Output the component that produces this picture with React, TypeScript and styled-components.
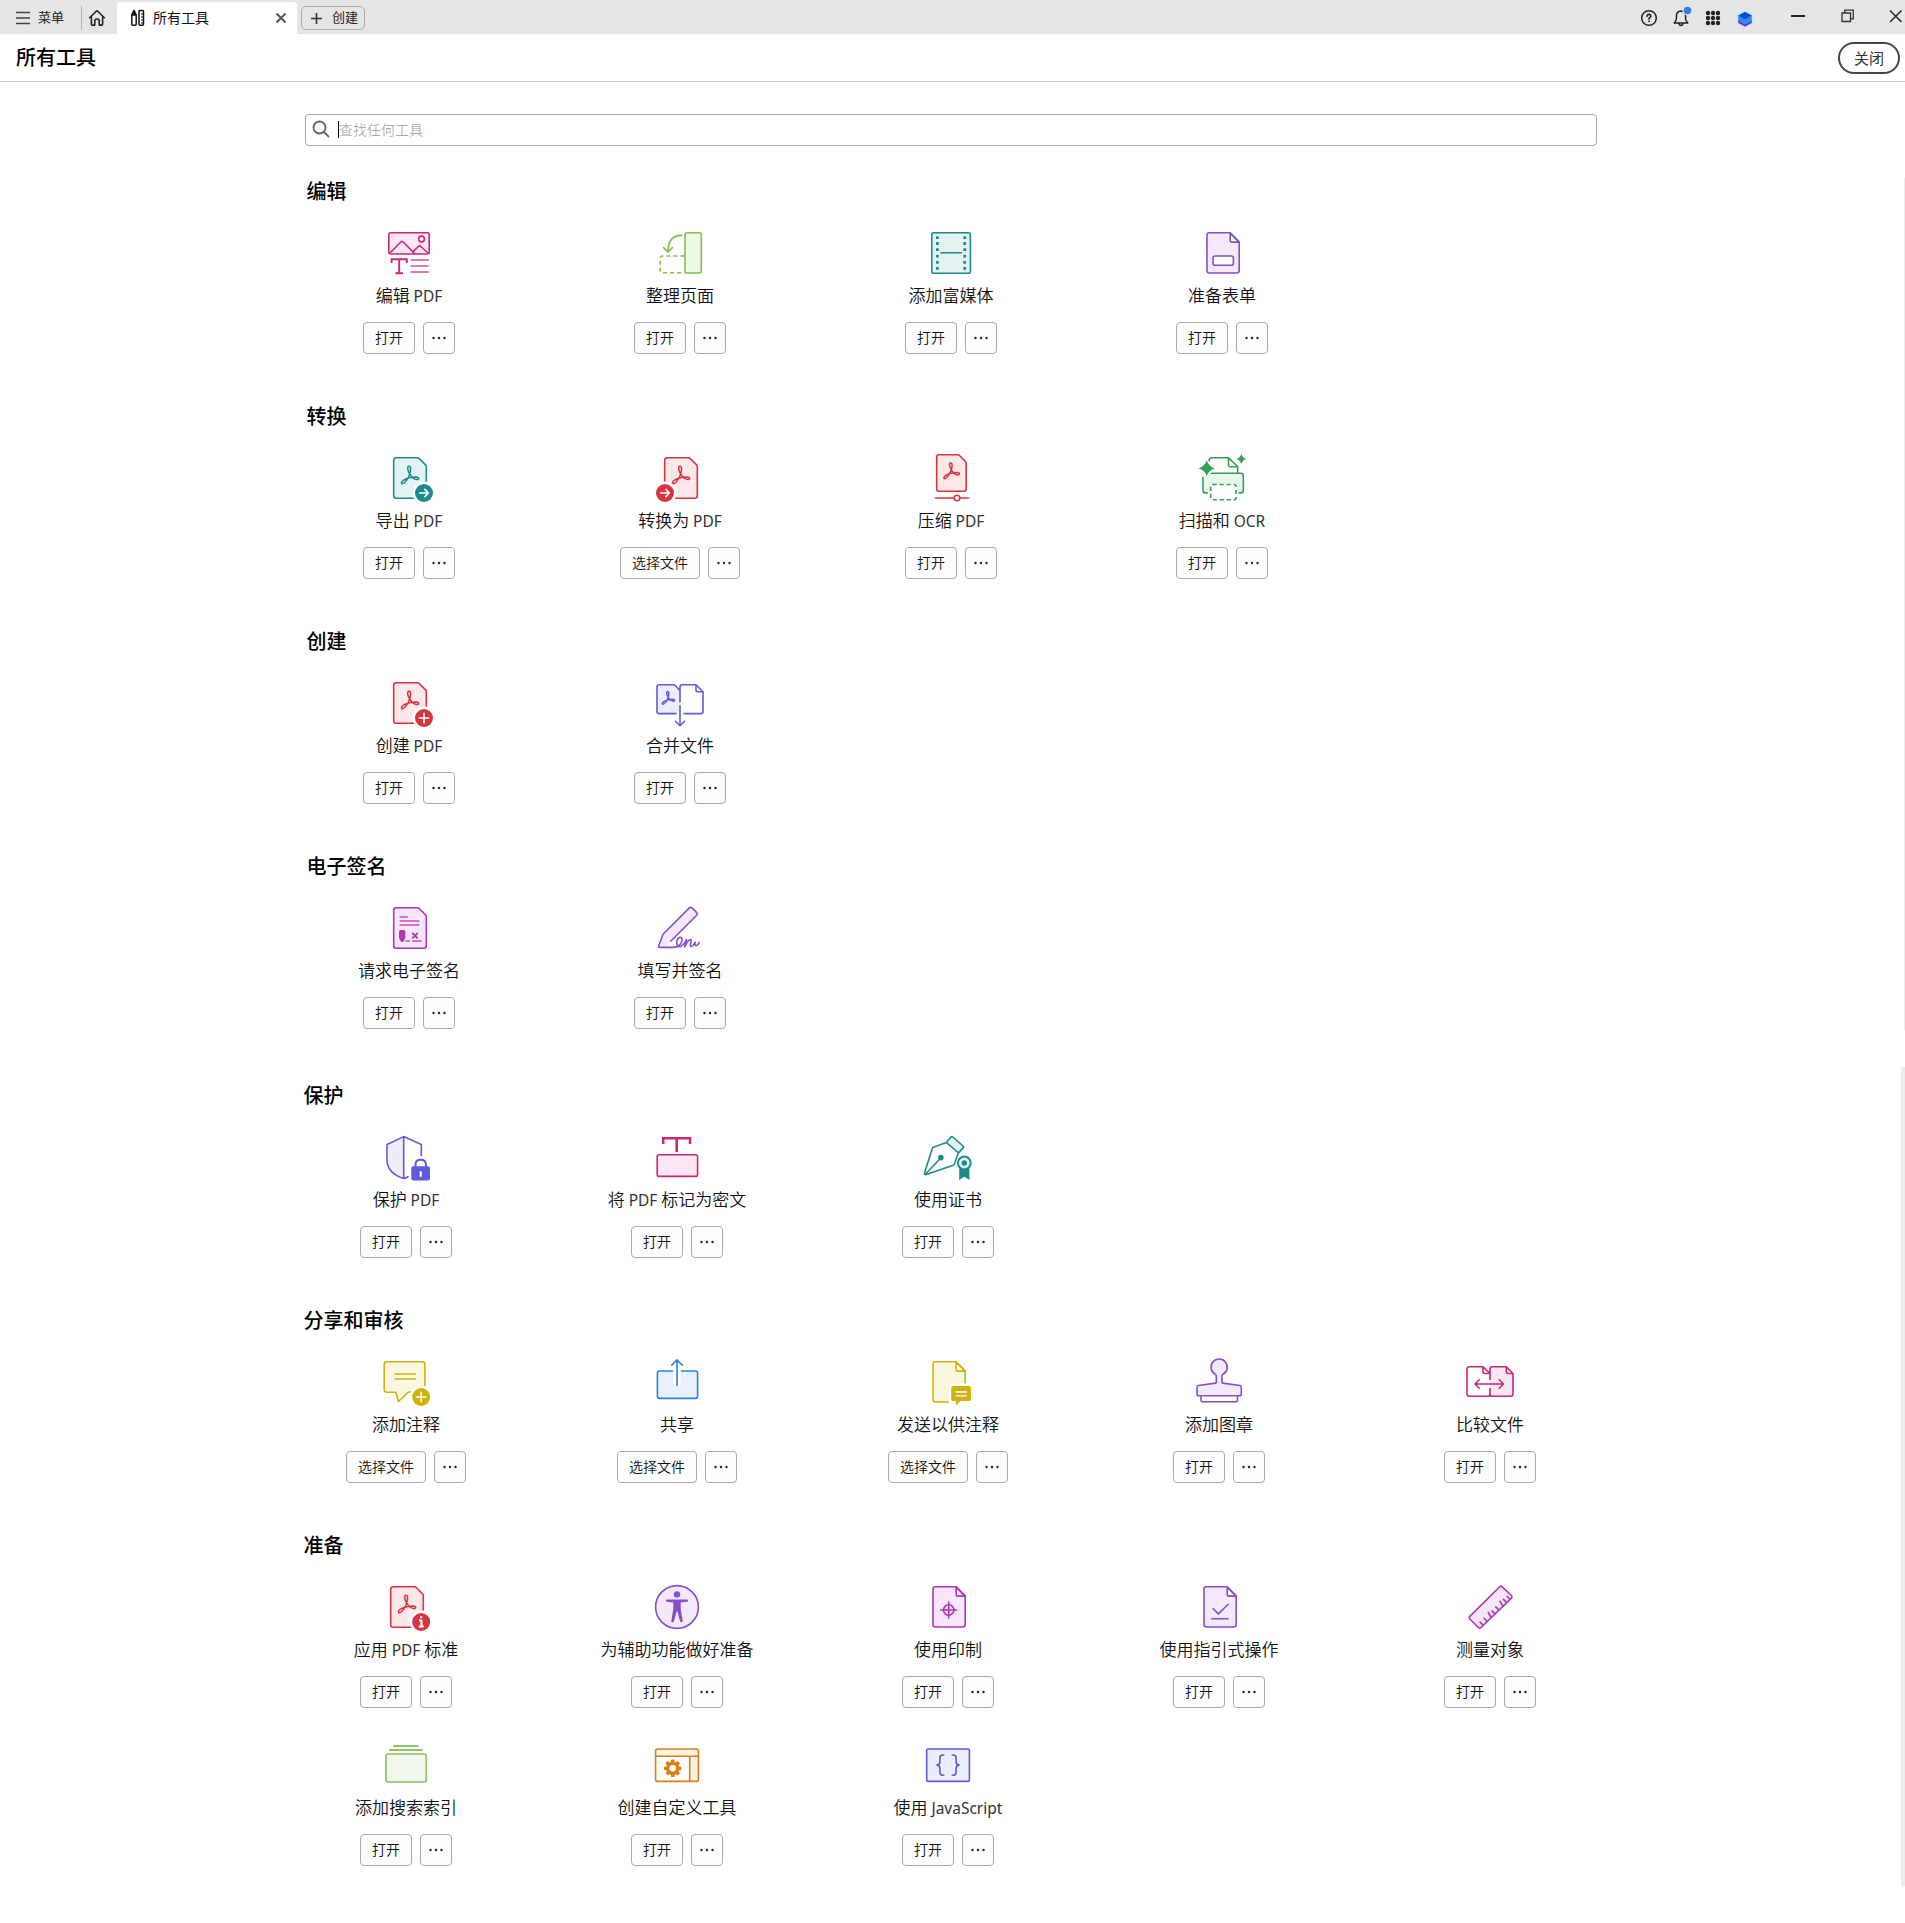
import React from "react";
import styled, { createGlobalStyle } from "styled-components";

const GlobalStyle = createGlobalStyle`
  * { box-sizing: border-box; }
  body {
    margin: 0;
    background: #fff;
    color: #222;
    font-family: "Noto Sans CJK SC", "Noto Sans", sans-serif;
    overflow: hidden;
  }
  button { font: inherit; color: inherit; margin: 0; padding: 0; }
`;

/* ---------- palette ---------- */

type Tone = { line: string; fill: string };
const magenta: Tone = { line: "#c9267c", fill: "#fbe6f3" };
const lime: Tone = { line: "#82c04a", fill: "#eff7e7" };
const moss: Tone = { line: "#91c169", fill: "#f1f7ea" };
const teal: Tone = { line: "#1d8c88", fill: "#e3f3f3" };
const violet: Tone = { line: "#8450c6", fill: "#f3e9fb" };
const purple: Tone = { line: "#ae35b8", fill: "#f7e6fa" };
const red: Tone = { line: "#d63540", fill: "#fce8e8" };
const green: Tone = { line: "#33a150", fill: "#e9f6ec" };
const indigo: Tone = { line: "#5d5bde", fill: "#eeedfb" };
const gold: Tone = { line: "#cdb30c", fill: "#faf7e1" };
const blue: Tone = { line: "#2c80dd", fill: "#e8f1fc" };
const orange: Tone = { line: "#d97f16", fill: "#fdf3e4" };

/* ---------- tool drawings ---------- */

const Drawing = styled.svg<{ $tone: Tone }>`
  display: block;
  flex: none;
  overflow: visible;
  stroke: ${(p) => p.$tone.line};
  stroke-width: 1.6;
  stroke-linecap: round;
  stroke-linejoin: round;
  fill: none;
  .tint { fill: ${(p) => p.$tone.fill}; }
  .pale { fill: ${(p) => p.$tone.fill}; stroke: none; }
  .solid { fill: ${(p) => p.$tone.line}; stroke: none; }
  .white { fill: #fff; }
  .blank { fill: #fff; stroke: none; }
  .inv { stroke: #fff; }
`;

function Art({ tone, children }: { tone: Tone; children: React.ReactNode }) {
  return (
    <Drawing $tone={tone} width="52" height="48" viewBox="0 0 52 48">
      {children}
    </Drawing>
  );
}

const Trefoil = ({ x, y, s = 1 }: { x: number; y: number; s?: number }) => (
  <path
    transform={`translate(${x} ${y}) scale(${s})`}
    strokeWidth={1.5 / s}
    d="M8.2.8C6.2.8 6.5 4.5 8.7 8.2c2 3.4 5 5.9 7.300 5.900 2.700 0 2.600-2.600-.7-2.700-4.600 0-9.300 1.200-12.500 3.200-2.800 1.800-2.700 4-1 3.700C4.400 17.800 7.700 12.500 9 8.200c1-4 1.300-7.400-.8-7.400Z"
  />
);

const CutDoc = () => (
  <path className="tint" d="M13.500 4.800H34.500q1 0 1.700.7l6.400 6.400q.7.7.7 1.700V42.700q0 2.500-2.500 2.500H13.200q-2.500 0-2.500-2.500V7.300q0-2.500 2.800-2.500Z" />
);

const FoldDoc = () => (
  <>
    <path className="tint" d="M13.200 4.800H34.200l9 9V42.500q0 2.500-2.500 2.500H13.500q-2.500 0-2.500-2.500V7.300q0-2.500 2.200-2.500Z" />
    <path className="white" d="M34.200 5.200v7q0 1.900 1.900 1.900h6.800Z" />
  </>
);

const Badge = ({ x, children }: { x: number; children: React.ReactNode }) => (
  <>
    <circle className="blank" cx={x} cy="40" r="11.500" />
    <circle className="solid" cx={x} cy="40" r="9" />
    <g className="inv" strokeWidth="1.600">{children}</g>
  </>
);

const icons: Record<string, React.ReactNode> = {
  edit: (
    <Art tone={magenta}>
      <rect className="tint" x="5.800" y="4.800" width="40.400" height="21.200" rx="2" />
      <circle cx="38.500" cy="11" r="2.900" className="white" />
      <path d="M7 25l10.800-11q1.200-1.100 2.400 0L31.500 25.500M30 23.700l5.400-5.200q1.200-1.100 2.400 0L45 25" />
      <path strokeWidth="1.900" strokeLinecap="butt" strokeLinejoin="miter" d="M8.600 35v-3.700h15.200V35M16.200 31.300v14M12.400 45.200h7.600" />
      <path strokeWidth="1.600" opacity=".8" d="M28.200 32h17M28.200 38h17M28.200 44h17" />
    </Art>
  ),
  organize: (
    <Art tone={lime}>
      <rect className="tint" x="31" y="4.800" width="16.300" height="40.200" rx="2" />
      <path strokeDasharray="4 3" strokeLinecap="butt" d="M30.500 28H8.500q-2.300 0-2.300 2.300V42.500q0 2.300 2.300 2.300H30.500" />
      <path d="M27.500 7.400C18.500 7.400 14 12 14 23.500M9.600 19.600l4.400 4.300 4.400-4.300" />
    </Art>
  ),
  media: (
    <Art tone={teal}>
      <rect className="tint" x="6.800" y="4.800" width="38.600" height="40.400" rx="2" />
      {[9.7, 15.5, 21.6, 28.2, 34.4, 40.400].map((y) => (
        <g key={y}>
          <rect className="solid" x="11" y={y - 1.4} width="2.800" height="2.800" rx=".6" />
          <rect className="solid" x="38.300" y={y - 1.4} width="2.800" height="2.800" rx=".6" />
        </g>
      ))}
      <path d="M16 24.800h20.500" />
    </Art>
  ),
  form: (
    <Art tone={violet}>
      <FoldDoc />
      <rect className="white" x="17" y="28" width="20.400" height="9.300" rx="2" />
    </Art>
  ),
  exportPdf: (
    <Art tone={teal}>
      <CutDoc />
      <Trefoil x={17.8} y={12.5} />
      <Badge x={41}><path d="M36.600 40h8.600M41.800 36.400L45.400 40l-3.600 3.600" /></Badge>
    </Art>
  ),
  convertPdf: (
    <Art tone={red}>
      <CutDoc />
      <Trefoil x={17.8} y={12.5} />
      <Badge x={11}><path d="M6.600 40h8.600M11.800 36.400L15.400 40l-3.600 3.600" /></Badge>
    </Art>
  ),
  compress: (
    <Art tone={red}>
      <path className="tint" d="M14 1.800H32.800q1 0 1.700.7l6 6q.7.7.7 1.700V36q0 2.300-2.300 2.300H14q-2.300 0-2.300-2.300V4q0-2.200 2.300-2.200Z" />
      <Trefoil x={18.3} y={9.200} s={0.9} />
      <path d="M10.500 45h33" />
      <circle className="white" cx="32" cy="45" r="2.800" />
    </Art>
  ),
  ocr: (
    <Art tone={green}>
      <path d="M13 9V8q0-3.200 3.200-3.200H32.500L41.600 13.500V19.500M32.500 5.200v6.900q0 1.600 1.600 1.600h7" />
      <path className="pale" d="M7 20.300H46q1.400 0 1.400 1.400V39.800H41V31H14v8.800H7Z" />
      <path d="M13.500 20.200H44.700q2.600 0 2.600 2.600V37.500q0 2.400-2.400 2.400H43.200M7 24.500v13q0 2.400 2.400 2.400h1.900" />
      <path className="white" strokeDasharray="4.200 2.800" strokeLinecap="butt" d="M16.500 31.500H38.500q1.500 0 1.500 1.500V45q0 1.800-1.800 1.800H16.500Q14.700 46.800 14.700 45V33q0-1.500 1.800-1.500Z" />
      <path className="blank" d="M2 15.300L10.700 6 19.500 15.300 10.700 24.500Z" />
      <path className="solid" d="M10.700 7.200q1.800 6.200 8.300 8.100-6.500 1.900-8.300 8.100-1.800-6.200-8.300-8.100 6.500-1.900 8.300-8.100ZM45.300 1q1.100 3.900 5 5-3.900 1.100-5 5-1.100-3.900-5-5 3.900-1.100 5-5Z" />
    </Art>
  ),
  createPdf: (
    <Art tone={red}>
      <CutDoc />
      <Trefoil x={17.8} y={12.5} />
      <Badge x={41}><path d="M36.300 40h9.400M41 35.300v9.400" /></Badge>
    </Art>
  ),
  combine: (
    <Art tone={indigo}>
      <path className="pale" d="M3 7H20.500L26 13V35.500H3Z" />
      <path d="M22 35.600H5.200q-2.200 0-2.200-2.200V9q0-2.200 2.200-2.200H19.500q1 0 1.700.7l4.800 5M26 24V9q0-2.200 2.200-2.200H42L49 13.800V33.400q0 2.200-2.200 2.200H30" />
      <path d="M42 7.200v5q0 1.600 1.600 1.600h5" />
      <Trefoil x={7.8} y={13} s={0.72} />
      <path d="M26 27.700V47.500M21.500 43.200L26 47.700l4.500-4.500" />
    </Art>
  ),
  esign: (
    <Art tone={purple}>
      <CutDoc />
      <path opacity=".85" d="M17.200 14h7M17.200 18h18.600M17.200 22h18.600M23 38h3.500M29.700 38h8.500" />
      <path className="solid" d="M16 28.500q0-1.500 1.500-1.500h3.300q1.500 0 1.500 1.500v6.500l-1.700 3.500q-1.400 1-2.800 0L16 35Z" />
      <path strokeWidth="1.800" d="M29.800 30.500l4.400 4.400M34.200 30.500l-4.400 4.400" />
    </Art>
  ),
  fillSign: (
    <Art tone={violet}>
      <path className="pale" d="M4.500 44.200L8.500 31 35 4.700 43.500 11 16.700 38.700 11 44Z" />
      <path d="M16.700 38.200L42.700 12.200q1.200-1.300 0-2.600L38 4.900q-1.400-1.200-2.700 0L9 31.200 4.600 43.200q-.3 1.200.9 1.200H19c6 0 10.500-5.500 8.500-9.500-2.500-2.300-6 3-4.500 6.800 1.700 4.500 6.500 1 9.500-5.200l-1.900 7.500c2.300-5.200 5-8 6.300-7.300 1.300.9-1.800 6.300-.3 6.800 1.700.4 3.500-2.300 4.500-4.300-.5 2.800.2 3.900 1.500 3.400 1.400-.6 2-1.600 2.600-3.200" />
    </Art>
  ),
  protect: (
    <Art tone={indigo}>
      <path className="pale" d="M23.700 4.500L7 12V28q0 13 16.700 18.500Z" />
      <path d="M28 44.700q-2.200 1.300-4.300 1.900Q7 41 7 28V12.500L23.700 4.600 41.300 12.500V23.500M23.700 4.600v42" />
      <path strokeWidth="2" d="M35.500 35v-2.500q0-4.700 5.200-4.700t5.200 4.700V35" />
      <rect className="solid" x="31.300" y="34.200" width="18.700" height="14.300" rx="2" />
      <path className="inv" strokeWidth="2.200" d="M40.700 40v4" />
    </Art>
  ),
  redact: (
    <Art tone={magenta}>
      <path strokeWidth="2.600" strokeLinecap="butt" strokeLinejoin="miter" d="M12.200 12V6.300H39V12M25.700 6.300V20" />
      <rect className="tint" x="6.200" y="22.800" width="40.400" height="21.600" rx="2" />
    </Art>
  ),
  certificate: (
    <Art tone={teal}>
      <path className="tint" d="M24.300 10.500L29 5q.9-1 1.900 0L41 14q1 .9.100 1.900l-4.600 5Z" />
      <path d="M24.300 10.500L11.500 15.200q-1 .4-1.200 1.400L2.500 41q-.4 2.200 1.800 1.600L31.200 33.200q1.100-.4 1.300-1.500L36.300 21M3.300 42.200L17.800 27" />
      <circle className="solid" cx="18.900" cy="25.600" r="2.800" />
      <path className="solid" d="M37.200 36.500h10.200V48l-5.100-3.300L37.200 48Z" />
      <circle className="tint" cx="42.300" cy="31" r="6.400" strokeWidth="2" />
      <circle className="solid" cx="42.300" cy="31" r="2.700" />
    </Art>
  ),
  comment: (
    <Art tone={gold}>
      <path className="tint" d="M7 4.800H42.300q2.600 0 2.600 2.600V33q0 2-2 2H28.500L18.500 44.500 15.700 35.200H6.800Q4.200 35.200 4.200 32.600V7.400Q4.200 4.800 7 4.800Z" />
      <path d="M15.200 17h20M15.200 22h20" />
      <Badge x={41.200}><path d="M36.500 40h9.400M41.200 35.300v9.400" /></Badge>
    </Art>
  ),
  share: (
    <Art tone={blue}>
      <rect className="pale" x="6.400" y="14" width="40.200" height="27.400" />
      <rect className="blank" x="22.300" y="12" width="7.400" height="17.500" />
      <path d="M21.500 14H8.600q-2.200 0-2.200 2.200V39.200q0 2.200 2.200 2.200H44.400q2.200 0 2.200-2.200V16.200q0-2.200-2.200-2.200H30.500M26 28.500V3M20.700 8.200L26 2.900l5.300 5.300" />
    </Art>
  ),
  sendComment: (
    <Art tone={gold}>
      <FoldDoc />
      <path className="blank" d="M26.800 26.500H47V50H26.800Z" />
      <path className="solid" d="M31.200 29H47q2 0 2 2V42q0 2-2 2H38.500L33.800 48.700V44H31.200q-2 0-2-2V31q0-2 2-2Z" />
      <path className="inv" strokeWidth="1.300" d="M34 35h10.300M34 38.800h10.300" />
    </Art>
  ),
  stamp: (
    <Art tone={violet}>
      <path className="tint" d="M23.300 25.300V19q0-1-1-1.700a8.100 8.100 0 1 1 7.700 0q-1 .7-1 1.700v6.300q0 .7.700.8L46.800 28.500q1.500.3 1.500 1.800V37q0 1.800-1.800 1.800H5.700Q4 38.800 4 37V30.300q0-1.500 1.500-1.800L22.600 26.100q.7-.1.700-.8Z" />
      <path d="M8 39v4.300q0 1.500 1.500 1.500H43q1.500 0 1.500-1.500V39" />
    </Art>
  ),
  compare: (
    <Art tone={magenta}>
      <path className="pale" d="M26 10H42.500L49 17V39.500H26Z" />
      <path d="M19 9.800H5.200Q3 9.800 3 12V37q0 2.200 2.200 2.200H23.800Q26 39.200 26 37q0 2.200 2.200 2.200H46.800Q49 39.200 49 37V16.500L42.300 9.800H28.200Q26 9.800 26 12v10.500M26 31.500V37M26 16.500L19 9.800V15q0 1.500 1.500 1.500H26M42.300 9.800V15q0 1.500 1.500 1.500H49M11.500 27h27.500M15.200 22.800L11 27l4.200 4.200M35.300 22.800L39.500 27l-4.200 4.200" />
    </Art>
  ),
  standard: (
    <Art tone={red}>
      <CutDoc />
      <Trefoil x={17.8} y={12.5} />
      <Badge x={41.200}><path strokeWidth="2" strokeLinecap="butt" d="M39 38.400h2.500v6.300M38.800 44.500h5M40.100 35.200h2.200" /></Badge>
    </Art>
  ),
  accessibility: (
    <Art tone={violet}>
      <circle className="tint" cx="26" cy="25" r="21.400" />
      <circle className="solid" cx="26" cy="12.400" r="3.200" />
      <path className="solid" d="M16 17.400H36q1.200.1 1.200 1.200T36 19.800L29.700 20.600V27l2 12q.1 1.200-1.200 1.300-1.100 0-1.400-1.100L26.400 29.500h-.8L22.900 39.200q-.3 1.100-1.400 1.100-1.300-.1-1.200-1.300l2-12V20.600L16 19.800q-1.200-.1-1.200-1.200T16 17.400Z" />
    </Art>
  ),
  print: (
    <Art tone={purple}>
      <FoldDoc />
      <circle cx="26.700" cy="28" r="5.200" />
      <path d="M18.700 28h16M26.700 20v16" />
    </Art>
  ),
  guided: (
    <Art tone={violet}>
      <FoldDoc />
      <path d="M20.200 26.700l5.200 5.200 9.800-9.600M18.700 36.700h16.300" />
    </Art>
  ),
  ruler: (
    <Art tone={purple}>
      <path className="tint" d="M35.700 4.800q1.300-1.200 2.600 0L47.500 13.500q1.200 1.300 0 2.600L17 45.500q-1.300 1.200-2.600 0L5.800 37q-1.200-1.300 0-2.600Z" />
      <path d="M19.300 43.300l-3.200-3.200M23.200 39.500l-3.200-3.200M27.100 35.700l-2.800-5.200M31 31.900l-3-3M34.900 28.100l-3.200-3.200M38.800 24.400l-2.800-5.200M42.700 20.600l-3.200-3.200M46 17.300l-3-3" />
    </Art>
  ),
  index: (
    <Art tone={moss}>
      <path strokeLinecap="butt" strokeWidth="1.800" d="M13.300 6h25.200M9.200 10h33.600" />
      <rect className="tint" x="6" y="14" width="40.300" height="28" rx="2" strokeWidth="1.700" />
    </Art>
  ),
  custom: (
    <Art tone={orange}>
      <path className="pale" d="M5 9H47.400V41.500H39V16H5Z" />
      <rect x="4.600" y="9" width="42.800" height="32.400" rx="2" />
      <path d="M5 16.200H47M38.700 16.500V41" />
      <g transform="translate(21.700 28.300)">
        <circle r="4.900" strokeWidth="3.200" />
        {[0, 45, 90, 135, 180, 225, 270, 315].map((a) => (
          <rect key={a} className="solid" x="-1.900" y="-8.700" width="3.800" height="4" rx="1" transform={`rotate(${a})`} />
        ))}
      </g>
    </Art>
  ),
  script: (
    <Art tone={indigo}>
      <rect className="tint" x="4.700" y="9" width="42.700" height="32.400" rx="1.500" />
      <path d="M21.800 15h-1q-2.900 0-2.900 2.900v4q0 2.700-3 3.200 3 .5 3 3.200v4q0 2.900 2.900 2.900h1M30.200 15h1q2.900 0 2.900 2.900v4q0 2.700 3 3.200-3 .5-3 3.200v4q0 2.900-2.900 2.900h-1" />
    </Art>
  ),
};

/* ---------- title bar ---------- */

const TitleBar = styled.div`
  display: flex;
  height: 34px;
  background: #e5e5e5;
  font-size: 13px;
  padding-left: 16px;
`;

const Menu = styled.div`
  display: flex;
  align-items: center;
  gap: 8px;
  width: 65px;
  height: 34px;
  padding-bottom: 1px;
  svg { margin-top: 2px; }
`;

const Divider = styled.div`
  width: 1px;
  height: 24px;
  margin-top: 6px;
  background: #b5b5b5;
`;

const Home = styled.div`
  width: 35px;
  padding: 9px 0 0 6px;
`;

const Tab = styled.div`
  display: flex;
  align-items: center;
  width: 180px;
  height: 32px;
  margin-top: 2px;
  padding: 0 10px 0 13px;
  background: #fff;
  border-radius: 4px 4px 0 0;
  color: #111;
  font-size: 14px;
  line-height: 28px;
`;

const TabName = styled.span`
  flex: 1;
  margin-left: 8px;
  padding-bottom: 3px;
`;

const Create = styled.button`
  display: flex;
  align-items: center;
  gap: 10px;
  width: 64px;
  height: 24px;
  margin: 6px 0 0 4px;
  padding: 0 0 2px 9px;
  border: 1px solid #aaa;
  border-radius: 5px;
  background: transparent;
  font-size: 13px;
  line-height: 20px;
  svg { margin-top: 2px; }
`;

const Status = styled.div`
  display: flex;
  margin-left: auto;
`;

const StatusIcon = styled.div<{ $width: number }>`
  display: flex;
  justify-content: center;
  width: ${(p) => p.$width}px;
  padding-top: 8px;
`;

const CloseWindow = styled.div`
  width: 45px;
  padding: 8px 0 0 29px;
`;

function Bar() {
  return (
    <TitleBar>
      <Menu>
        <svg width="14" height="14" stroke="#444" strokeWidth="1.600"><path d="M0 1.500h14M0 7h14M0 12.500h14" /></svg>
        菜单
      </Menu>
      <Divider />
      <Home>
        <svg width="18" height="18" viewBox="0 0 18 18" fill="none" stroke="#222" strokeWidth="1.600" strokeLinejoin="round" strokeLinecap="round">
          <path d="M1.600 8.700L8.300 2.200q.7-.6 1.400 0l6.700 6.500M3.400 8v7.300q0 .8.800.8h2.600v-4.300q0-1.800 2.200-1.800t2.200 1.800v4.300h2.600q.8 0 .8-.8V8" />
        </svg>
      </Home>
      <Tab>
        <svg width="15" height="18" viewBox="0 0 15 18" fill="none" stroke="#111" strokeWidth="1.500" strokeLinejoin="round">
          <path d="M1.800 6L4 1.500 6.200 6v9.300q0 1-1 1H2.800q-1 0-1-1Z" />
          <path fill="#111" d="M2 6L4 1.800 6 6Z" />
          <rect x="9" y="1.600" width="4.500" height="14.700" rx="1" />
          <path d="M11 5h2.500M11 8h2.500M11 11h2.500M11 14h2.500" strokeWidth="1" />
        </svg>
        <TabName>所有工具</TabName>
        <svg width="12" height="12" stroke="#555" strokeWidth="2"><path d="M1.500 1.500l9 9M10.500 1.500l-9 9" /></svg>
      </Tab>
      <Create>
        <svg width="11" height="11" stroke="#333" strokeWidth="1.600"><path d="M0 5.500h11M5.500 0v11" /></svg>
        创建
      </Create>
      <Status>
        <StatusIcon $width={32}>
          <svg width="20" height="20" viewBox="0 0 20 20" fill="none" stroke="#222" strokeWidth="1.500" strokeLinecap="round">
            <circle cx="10" cy="10" r="7.300" />
            <path strokeWidth="1.700" d="M8.100 8.200Q8.200 6.400 10 6.400T11.900 8q0 1-1.200 1.700-.7.400-.7 1.200" />
            <circle cx="10" cy="13.300" r=".5" fill="#222" strokeWidth="1" />
          </svg>
        </StatusIcon>
        <StatusIcon $width={32}>
          <svg width="20" height="20" viewBox="0 0 20 20" fill="none" stroke="#222" strokeWidth="1.500" strokeLinejoin="round" overflow="visible">
            <path d="M3.200 15h13.600q-1.900-1.900-2.200-4V8q-.2-4.800-4.600-5Q5.600 3.200 5.400 8v3q-.3 2.100-2.200 4ZM8 15.500q.4 2 2 2t2-2" />
            <circle cx="16.500" cy="2.500" r="5" fill="#e5e5e5" stroke="none" />
            <circle cx="16.500" cy="2.500" r="3.800" fill="#3a7de0" stroke="none" />
          </svg>
        </StatusIcon>
        <StatusIcon $width={32}>
          <svg width="20" height="20" viewBox="0 0 20 20" fill="#222">
            {[5, 10, 15].map((y) => [5, 10, 15].map((x) => <circle key={`${x}-${y}`} cx={x} cy={y} r="2.200" />))}
          </svg>
        </StatusIcon>
        <StatusIcon $width={32}>
          <svg width="20" height="20" viewBox="0 0 20 20">
            <path fill="#b8f0e8" d="M10 2l8 3.500v9L10 19l-8-4.500v-9Z" />
            <path fill="#6a35d0" d="M3.200 12L10 15.500 16.800 12v3L10 18.800 3.200 15Z" />
            <path fill="#2f8cf5" d="M3.200 7.500L10 11l6.800-3.500v5.300L10 16.500l-6.800-3.700Z" />
            <path fill="#1247d2" d="M10 3.700l6.900 3.700L10 11.600 3.100 7.400Z" />
          </svg>
        </StatusIcon>
        <StatusIcon $width={74}>
          <svg width="14" height="18" stroke="#222" strokeWidth="2"><path d="M0 8h14" /></svg>
        </StatusIcon>
        <StatusIcon $width={25}>
          <svg width="14" height="16" viewBox="0 0 14 16" fill="none" stroke="#333" strokeWidth="1.300">
            <path d="M1 5h8.500v8.500H1ZM3.700 4.500V2.200h8.600v8.600H10" />
          </svg>
        </StatusIcon>
        <CloseWindow>
          <svg width="14" height="14" stroke="#222" strokeWidth="1.500"><path d="M1 1.500l11.500 11.500M12.500 1.500L1 13" /></svg>
        </CloseWindow>
      </Status>
    </TitleBar>
  );
}

/* ---------- page ---------- */

const Header = styled.header`
  display: flex;
  align-items: center;
  justify-content: space-between;
  height: 48px;
  padding: 0 5px 0 16px;
  border-bottom: 1px solid #ccc;
`;

const Title = styled.h1`
  margin: 0;
  padding-bottom: 2px;
  font-size: 20px;
  line-height: 28px;
  font-weight: 500;
  color: #000;
`;

const CloseButton = styled.button`
  width: 62px;
  height: 32px;
  border: 2px solid #464646;
  border-radius: 16px;
  background: #fff;
  font-size: 15px;
  line-height: 26px;
  color: #333;
`;

const Search = styled.div`
  display: flex;
  align-items: center;
  width: 1292px;
  height: 32px;
  margin: 32px 0 32px 305px;
  padding: 0 0 2px 6px;
  border: 1px solid #a8a8a8;
  border-radius: 4px;
  font-size: 14px;
  font-weight: 300;
  line-height: 28px;
  color: #999;
`;

const Caret = styled.span`
  width: 1px;
  height: 17px;
  margin-left: 8px;
  background: #000;
`;

const Panel = styled.div<{ $inset: number }>`
  display: flex;
  justify-content: space-between;
  padding-left: ${(p) => p.$inset}px;
`;

const Track = styled.div<{ $width: number; $height: number }>`
  width: ${(p) => p.$width}px;
  height: ${(p) => p.$height}px;
  background: #ececec;
`;

const Groups = styled.div<{ $top: number }>`
  padding-top: ${(p) => p.$top}px;
`;

const Group = styled.section`
  padding-bottom: 50px;
`;

const GroupTitle = styled.h2`
  margin: 0 0 25px 33px;
  font-size: 20px;
  line-height: 24px;
  font-weight: 500;
  color: #000;
`;

const Tools = styled.div`
  display: grid;
  grid-template-columns: repeat(5, 271px);
  row-gap: 32px;
`;

const Tool = styled.div`
  display: flex;
  flex-direction: column;
  align-items: center;
`;

const ToolName = styled.div`
  height: 24px;
  margin: 7px 0 15px;
  font-size: 17px;
  line-height: 24px;
  font-weight: 350;
  color: #111;
  white-space: nowrap;
`;

const Latin = styled.span`
  font-family: "Noto Sans", sans-serif;
  font-size: 15.500px;
  font-weight: 400;
  line-height: 20px;
  color: #333;
`;

const Actions = styled.div`
  display: flex;
  gap: 8px;
`;

const Action = styled.button<{ $width: number }>`
  display: flex;
  align-items: center;
  justify-content: center;
  width: ${(p) => p.$width}px;
  height: 32px;
  padding-bottom: 2px;
  border: 1px solid #a9a9a9;
  border-radius: 4px;
  background: #fdfdfd;
  font-size: 14px;
  font-weight: 350;
  line-height: 20px;
  color: #111;
`;

const Dots = styled.svg`
  margin-top: 1px;
  fill: #222;
`;

type ToolSpec = { icon: string; name: string; pick?: boolean };
type GroupSpec = { title: string; tools: ToolSpec[] };

const upper: GroupSpec[] = [
  {
    title: "编辑",
    tools: [
      { icon: "edit", name: "编辑 PDF" },
      { icon: "organize", name: "整理页面" },
      { icon: "media", name: "添加富媒体" },
      { icon: "form", name: "准备表单" },
    ],
  },
  {
    title: "转换",
    tools: [
      { icon: "exportPdf", name: "导出 PDF" },
      { icon: "convertPdf", name: "转换为 PDF", pick: true },
      { icon: "compress", name: "压缩 PDF" },
      { icon: "ocr", name: "扫描和 OCR" },
    ],
  },
  {
    title: "创建",
    tools: [
      { icon: "createPdf", name: "创建 PDF" },
      { icon: "combine", name: "合并文件" },
    ],
  },
  {
    title: "电子签名",
    tools: [
      { icon: "esign", name: "请求电子签名" },
      { icon: "fillSign", name: "填写并签名" },
    ],
  },
];

const lower: GroupSpec[] = [
  {
    title: "保护",
    tools: [
      { icon: "protect", name: "保护 PDF" },
      { icon: "redact", name: "将 PDF 标记为密文" },
      { icon: "certificate", name: "使用证书" },
    ],
  },
  {
    title: "分享和审核",
    tools: [
      { icon: "comment", name: "添加注释", pick: true },
      { icon: "share", name: "共享", pick: true },
      { icon: "sendComment", name: "发送以供注释", pick: true },
      { icon: "stamp", name: "添加图章" },
      { icon: "compare", name: "比较文件" },
    ],
  },
  {
    title: "准备",
    tools: [
      { icon: "standard", name: "应用 PDF 标准" },
      { icon: "accessibility", name: "为辅助功能做好准备" },
      { icon: "print", name: "使用印制" },
      { icon: "guided", name: "使用指引式操作" },
      { icon: "ruler", name: "测量对象" },
      { icon: "index", name: "添加搜索索引" },
      { icon: "custom", name: "创建自定义工具" },
      { icon: "script", name: "使用 JavaScript" },
    ],
  },
];

const mixed = (name: string) =>
  name.split(/([A-Za-z]+)/).map((part, i) => (i % 2 ? <Latin key={i}>{part}</Latin> : part));

function GroupList({ groups, top }: { groups: GroupSpec[]; top: number }) {
  return (
    <Groups $top={top}>
      {groups.map((group) => (
        <Group key={group.title}>
          <GroupTitle>{group.title}</GroupTitle>
          <Tools>
            {group.tools.map((tool) => (
              <Tool key={tool.name}>
                {icons[tool.icon]}
                <ToolName>{mixed(tool.name)}</ToolName>
                <Actions>
                  <Action $width={tool.pick ? 80 : 52}>{tool.pick ? "选择文件" : "打开"}</Action>
                  <Action $width={32} aria-label="more">
                    <Dots width="14" height="4">
                      <circle cx="1.500" cy="2" r="1.200" />
                      <circle cx="7" cy="2" r="1.200" />
                      <circle cx="12.500" cy="2" r="1.200" />
                    </Dots>
                  </Action>
                </Actions>
              </Tool>
            ))}
          </Tools>
        </Group>
      ))}
    </Groups>
  );
}

const Page = styled.div`
  width: 1905px;
  height: 1923px;
  overflow: hidden;
`;

const LowerPanel = styled(Panel)`
  margin-top: -12px;
`;

export default function App() {
  return (
    <Page>
      <GlobalStyle />
      <Bar />
      <Header>
        <Title>所有工具</Title>
        <CloseButton>关闭</CloseButton>
      </Header>
      <Search>
        <svg width="18" height="18" viewBox="0 0 18 18" fill="none" stroke="#666" strokeWidth="1.800" strokeLinecap="round">
          <circle cx="7.500" cy="7.500" r="6" />
          <path d="M12 12l4.500 4.500" />
        </svg>
        <Caret />
        查找任何工具
      </Search>
      <Panel $inset={273.5}>
        <GroupList groups={upper} top={1} />
        <Track $width={1} $height={852} />
      </Panel>
      <LowerPanel $inset={270.5}>
        <GroupList groups={lower} top={16} />
        <Track $width={4} $height={819} />
      </LowerPanel>
    </Page>
  );
}
